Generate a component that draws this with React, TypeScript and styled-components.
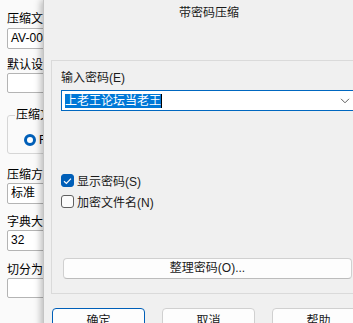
import React from "react";
import styled, { createGlobalStyle } from "styled-components";

const Global = createGlobalStyle`
  html, body { margin: 0; padding: 0; }
  body {
    font-family: "Liberation Sans", "Noto Sans CJK SC", sans-serif;
    font-size: 12px;
    color: #000;
    background: #f9f9f9;
  }
`;

const Screen = styled.div`
  position: relative;
  width: 353px;
  height: 323px;
  overflow: hidden;
  background: #fafafa;
`;

const BackWindow = styled.div`
  display: flex;
  flex-direction: column;
  padding-left: 7px;
  width: 120px;
`;

const Label = styled.div<{ $mt: number }>`
  margin-top: ${(p) => p.$mt}px;
  height: 16px;
  line-height: 16px;
  font-size: 12px;
  white-space: nowrap;
`;

const Input = styled.div<{ $mt?: number; $h?: number }>`
  margin-top: ${(p) => p.$mt ?? 0}px;
  box-sizing: border-box;
  height: ${(p) => p.$h ?? 21}px;
  width: 100px;
  border: 1px solid #b4b4b4;
  border-radius: 2px;
  background: #fff;
  padding-left: 3px;
  line-height: 19px;
  font-size: 12px;
  white-space: nowrap;
`;

const GroupBox = styled.div`
  position: relative;
  margin-top: 22px;
  box-sizing: border-box;
  height: 39px;
  width: 110px;
  border: 1px solid #d6d6d6;
  border-radius: 3px;
  display: flex;
  align-items: center;
  padding-left: 16px;
  padding-top: 10px;
  gap: 3px;
`;

const Legend = styled.span`
  position: absolute;
  top: -9px;
  left: 7px;
  padding: 0 1px;
  background: #fafafa;
  line-height: 16px;
  font-size: 12px;
`;

const Radio = styled.span`
  box-sizing: border-box;
  width: 12px;
  height: 12px;
  border-radius: 50%;
  border: 3.5px solid #005fb8;
  background: #fff;
`;

const Dialog = styled.div`
  position: absolute;
  left: 43px;
  top: 0;
  width: 331px;
  height: 345px;
  box-sizing: border-box;
  background: #f0f0f0;
  border-left: 1px solid #c4c4c4;
  box-shadow: -2px 0 7px rgba(0, 0, 0, 0.28);
  display: flex;
  flex-direction: column;
`;

const Title = styled.div`
  margin-top: 5px;
  height: 16px;
  line-height: 16px;
  text-align: center;
  font-size: 12px;
  color: #1a1a1a;
`;

const Panel = styled.div`
  margin: 39px 8px 0 7px;
  box-sizing: border-box;
  height: 234px;
  border: 1px solid #dadada;
  padding: 9px 0 0 9px;
  display: flex;
  flex-direction: column;
`;

const FieldLabel = styled.div`
  height: 16px;
  line-height: 16px;
  font-size: 12px;
  color: #1a1a1a;
`;

const Combo = styled.div`
  margin-top: 4px;
  box-sizing: border-box;
  height: 21px;
  width: 296px;
  background: #fff;
  border: 1px solid #0067c0;
  display: flex;
  align-items: center;
  padding-left: 3px;
  position: relative;
`;

const Selected = styled.span`
  background: #0078d7;
  color: #fff;
  line-height: 14px;
  height: 14px;
  font-size: 12px;
  white-space: nowrap;
`;

const Caret = styled.span`
  width: 1px;
  height: 14px;
  background: #000;
`;

const Chevron = styled.svg`
  position: absolute;
  right: 6px;
  top: 7px;
`;

const CheckRow = styled.label<{ $mt: number }>`
  margin-top: ${(p) => p.$mt}px;
  height: 21px;
  display: flex;
  align-items: center;
  gap: 3px;
  font-size: 12px;
  color: #1a1a1a;
`;

const Box = styled.span<{ $checked?: boolean }>`
  box-sizing: border-box;
  width: 13px;
  height: 13px;
  border-radius: 3px;
  display: flex;
  align-items: center;
  justify-content: center;
  background: ${(p) => (p.$checked ? "#005fb8" : "#fbfbfb")};
  border: 1px solid ${(p) => (p.$checked ? "#005fb8" : "#5f5f5f")};
`;

const WideButton = styled.div`
  margin-top: 46px;
  margin-left: 2px;
  box-sizing: border-box;
  height: 21px;
  width: 289px;
  background: #fdfdfd;
  border: 1px solid #d0d0d0;
  border-bottom-color: #bcbcbc;
  border-radius: 4px;
  text-align: center;
  line-height: 19px;
  font-size: 12px;
  color: #1a1a1a;
`;

const ButtonRow = styled.div`
  margin: 14px 0 0 8px;
  display: flex;
  gap: 17px;
`;

const Button = styled.div<{ $default?: boolean }>`
  box-sizing: border-box;
  width: 93px;
  height: 24px;
  background: #fdfdfd;
  border: 1px solid ${(p) => (p.$default ? "#005fb8" : "#d0d0d0")};
  border-radius: 4px;
  text-align: center;
  line-height: 22px;
  padding-top: 1px;
  font-size: 12px;
  color: #1a1a1a;
`;

export default function App() {
  return (
    <>
      <Global />
      <Screen>
        <BackWindow>
          <Label $mt={11}>压缩文件名</Label>
          <Input $mt={1}>AV-003</Input>
          <Label $mt={8}>默认设置</Label>
          <Input $h={20} />
          <GroupBox>
            <Legend>压缩文件格式</Legend>
            <Radio />
            <span>RAR</span>
          </GroupBox>
          <Label $mt={13}>压缩方式</Label>
          <Input>标准</Input>
          <Label $mt={10}>字典大小</Label>
          <Input>32</Input>
          <Label $mt={11}>切分为分卷</Label>
          <Input $h={20} />
        </BackWindow>

        <Dialog>
          <Title>带密码压缩</Title>
          <Panel>
            <FieldLabel>输入密码(E)</FieldLabel>
            <Combo>
              <Selected>上老王论坛当老王</Selected>
              <Caret />
              <Chevron width="10" height="6" viewBox="0 0 10 6">
                <path d="M1 0.8 L5 4.8 L9 0.8" fill="none" stroke="#606060" strokeWidth="1" />
              </Chevron>
            </Combo>
            <CheckRow $mt={59}>
              <Box $checked>
                <svg width="9" height="8" viewBox="0 0 9 8">
                  <path d="M1 4.2 L3.4 6.4 L8 1.6" fill="none" stroke="#fff" strokeWidth="1.2" />
                </svg>
              </Box>
              显示密码(S)
            </CheckRow>
            <CheckRow $mt={0}>
              <Box />
              加密文件名(N)
            </CheckRow>
            <WideButton>整理密码(O)...</WideButton>
          </Panel>
          <ButtonRow>
            <Button $default>确定</Button>
            <Button>取消</Button>
            <Button>帮助</Button>
          </ButtonRow>
        </Dialog>
      </Screen>
    </>
  );
}
